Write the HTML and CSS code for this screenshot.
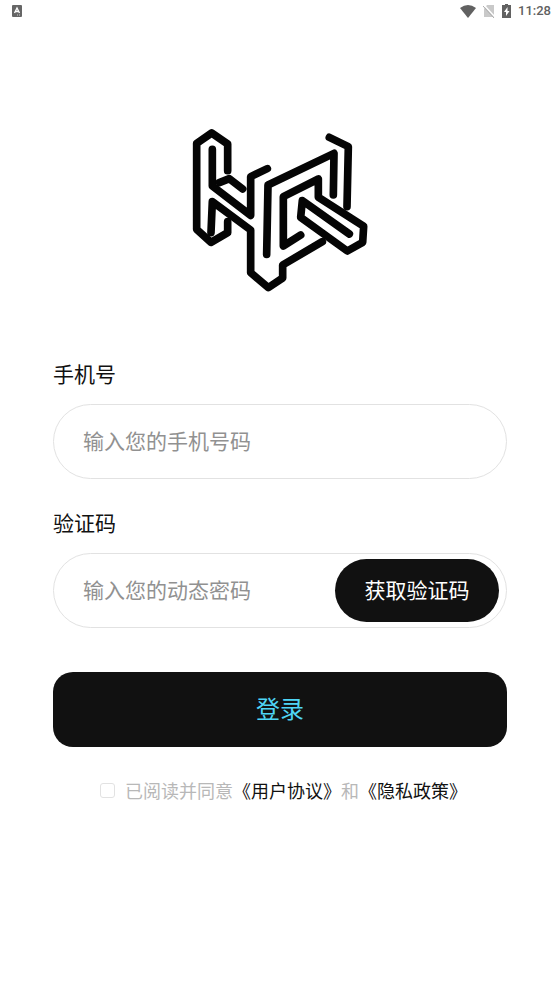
FILE: index.html
```html
<!DOCTYPE html>
<html lang="zh-CN">
<head>
    <meta charset="UTF-8">
    <meta name="viewport" content="width=device-width, initial-scale=1.0">
    <title>登录</title>
    <link rel="stylesheet" href="styles.css">
</head>
<body>
    <header class="status-bar">
        <svg class="app-icon" width="10" height="12" viewBox="0 0 10 12" aria-hidden="true">
            <rect width="10" height="12" rx="1" fill="#666"/>
            <path d="M2.5 8L5 3l2.5 5M3.5 6.5h3" fill="none" stroke="#fff" stroke-width="1.3"/>
            <path d="M5 10h1M7 10h1" stroke="#ccc"/>
        </svg>
        <div class="status-icons">
            <svg width="16" height="13" viewBox="0 0 16 13" aria-hidden="true">
                <path d="M0 3Q8-3 16 3L8 13z" fill="#616161"/>
            </svg>
            <svg width="12" height="13" viewBox="0 0 12 13" aria-hidden="true">
                <path d="M4 0h7v12H1V4z" fill="#c9c9c9"/>
                <path d="M1 0l11 12" stroke="#fff" stroke-width="1.5"/>
                <path d="M0 1l11 12" stroke="#adadad"/>
            </svg>
            <svg width="9" height="14" viewBox="0 0 9 14" aria-hidden="true">
                <path d="M3 0h3v1h3v13H0V1h3z" fill="#616161"/>
                <path d="M5.500 3L2 8h2v4l3.500-5H5.500z" fill="#fff"/>
            </svg>
            <span class="time">11:28</span>
        </div>
    </header>

    <main class="container">
        <svg class="logo" viewBox="0 0 540 510" role="img" aria-label="HQ">
            <path d="M113 137V57L65 24 20 55v258l43 39 50-29v-33"/>
            <path d="M67 73v110l115 88V155l50-24"/>
            <path d="M63 323l4-93 115 85v128l53 45 43-29v-39l119-70"/>
            <path d="M88 173l30-12 40 31"/>
            <path d="M230 388l4-208 198-95-2 125"/>
            <path d="M418 37l57 28-4 180"/>
            <path d="M332 330l-52 33V215l105-53v55l136 87-3 48-46 26-140-101 5-50 141 100"/>
        </svg>

        <form id="loginForm">
            <div class="form-group">
                <label for="phone">手机号</label>
                <div class="field">
                    <input type="tel" id="phone" placeholder="输入您的手机号码">
                </div>
            </div>
            <div class="form-group">
                <label for="code">验证码</label>
                <div class="field">
                    <input type="text" id="code" placeholder="输入您的动态密码">
                    <button type="button" class="code-btn">获取验证码</button>
                </div>
            </div>
            <button type="submit" class="login-btn">登录</button>
            <div class="agreement">
                <input type="checkbox" id="agree">
                <div><label for="agree">已阅读并同意</label><a href="#">《用户协议》</a>和<a href="#">《隐私政策》</a></div>
            </div>
        </form>
    </main>
</body>
</html>
```

FILE: styles.css
```css
* {
    box-sizing: border-box;
}
body {
    margin: 0;
    background: #fff;
    color: #111;
    font-family: "Noto Sans CJK SC", sans-serif;
    font-size: 21px;
    line-height: 30px;
}
svg {
    display: block;
}
input, button {
    font: inherit;
}

/* Barra de estado */
.status-bar {
    display: flex;
    justify-content: space-between;
    align-items: center;
    height: 22px;
    padding: 0 8px 0 12px;
}
.status-icons {
    display: flex;
    align-items: center;
    gap: 7px;
}
.time {
    color: #616161;
    font-family: Roboto, sans-serif;
    font-size: 13px;
    font-weight: 500;
    line-height: 22px;
}

.container {
    padding: 103px 52px 40px 53px;
}
.logo {
    width: 180px;
    margin: 0 auto 63px;
    fill: none;
    stroke: #050505;
    stroke-width: 23;
    stroke-linecap: round;
    stroke-linejoin: round;
}

/* Formulario */
.form-group {
    margin-bottom: 28px;
}
.form-group label {
    display: block;
    margin-bottom: 16px;
}
.field {
    display: flex;
    align-items: center;
    height: 75px;
    padding: 0 7px 0 29px;
    border: 1px solid #e2e2e2;
    border-radius: 38px;
}
.field input {
    flex: 1;
    min-width: 0;
    height: 100%;
    padding: 0 0 4px;
    border: none;
    outline: none;
    background: none;
}
.field input::placeholder {
    color: #919191;
}
.code-btn {
    width: 164px;
    height: 63px;
    padding: 0 0 4px;
    border: none;
    border-radius: 32px;
    background: #111;
    color: #fff;
    cursor: pointer;
}
.login-btn {
    display: block;
    width: 100%;
    height: 75px;
    margin-top: 44px;
    padding: 0 0 4px;
    border: none;
    border-radius: 20px;
    background: #111;
    color: #4fd5f5;
    font-size: 24px;
    cursor: pointer;
}
.agreement {
    display: flex;
    justify-content: center;
    align-items: center;
    gap: 10px;
    margin-top: 28px;
    padding-left: 7px;
    color: #b8b8b8;
    font-size: 18px;
}
.agreement input {
    appearance: none;
    width: 15px;
    height: 15px;
    margin: 0;
    border: 1px solid #e2e2e2;
    border-radius: 3px;
}
.agreement input:checked {
    background: #111;
}
.agreement a {
    color: #111;
    text-decoration: none;
}
```
